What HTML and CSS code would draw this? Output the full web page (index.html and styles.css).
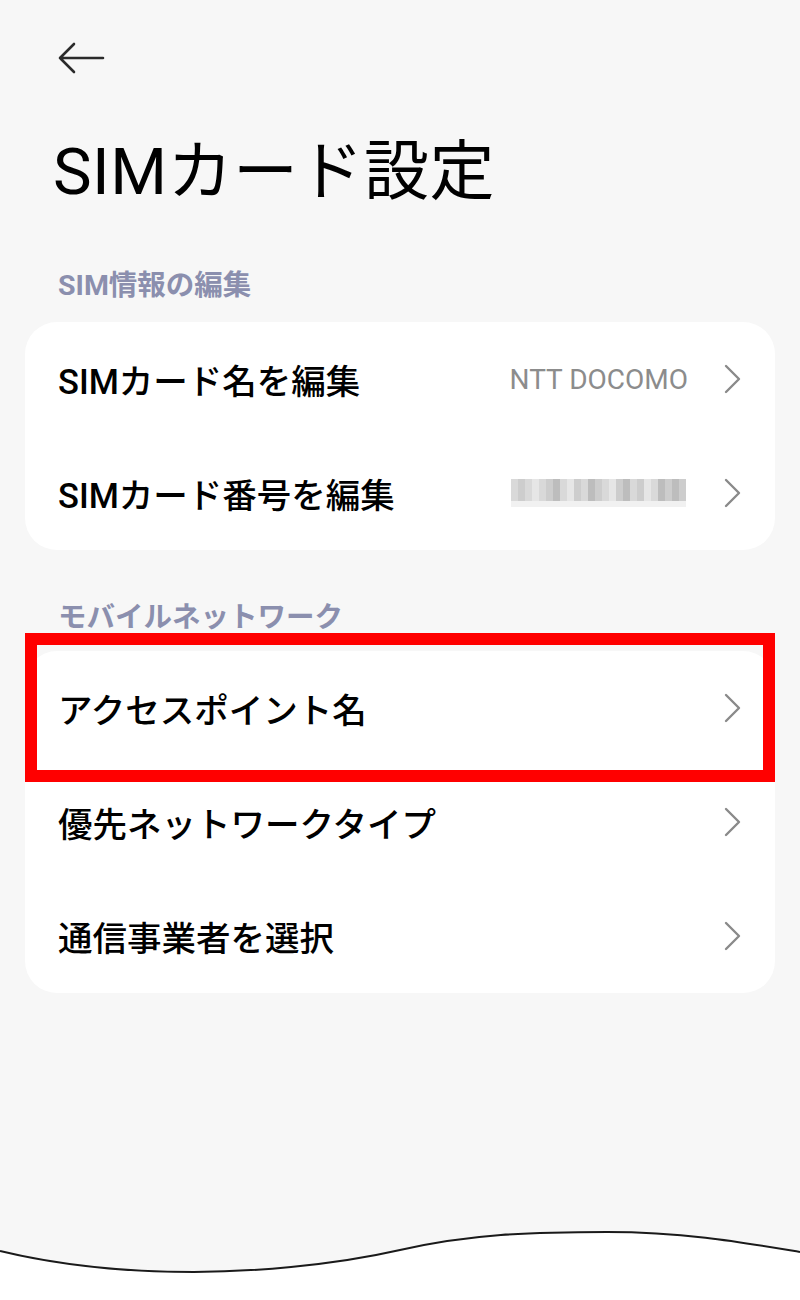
FILE: index.html
```html
<!DOCTYPE html>
<html lang="ja">
<head>
  <meta charset="UTF-8" />
  <meta name="viewport" content="width=device-width, initial-scale=1.0" />
  <title>SIMカード設定</title>
  <link rel="stylesheet" href="styles.css">
</head>
<body>
  <div class="page">
    <div class="topbar">
      <svg class="back" width="48" height="32" viewBox="0 0 48 32">
        <path d="M3 16 H46 M17 2 L3 16 L17 30" fill="none" stroke="#2b2b2b" stroke-width="2.6" stroke-linecap="round" stroke-linejoin="round"/>
      </svg>
    </div>

    <h1 class="title">SIMカード設定</h1>

    <h2 class="section">SIM情報の編集</h2>
    <div class="card">
      <div class="row">
        <span class="label">SIMカード名を編集</span>
        <span class="value">NTT DOCOMO</span>
        <svg class="chev" width="18" height="30" viewBox="0 0 18 30"><path d="M2 2 L15 15 L2 28" fill="none" stroke="#8a8a8a" stroke-width="2.4" stroke-linecap="round" stroke-linejoin="round"/></svg>
      </div>
      <div class="row">
        <span class="label">SIMカード番号を編集</span>
        <span class="blur">
          <span class="px g2"></span><span class="px g1"></span><span class="px g2"></span><span class="px g3"></span><span class="px g2"></span>
          <span class="px g1"></span><span class="px g4"></span><span class="px g2"></span><span class="px g3"></span><span class="px g1"></span>
          <span class="px g2"></span><span class="px g4"></span><span class="px g1"></span><span class="px g2"></span><span class="px g3"></span>
          <span class="px g1"></span><span class="px g4"></span><span class="px g2"></span><span class="px g1"></span><span class="px g3"></span>
          <span class="px g2"></span><span class="px g4"></span><span class="px g1"></span><span class="px g4"></span><span class="px g1"></span>
        </span>
        <svg class="chev" width="18" height="30" viewBox="0 0 18 30"><path d="M2 2 L15 15 L2 28" fill="none" stroke="#8a8a8a" stroke-width="2.4" stroke-linecap="round" stroke-linejoin="round"/></svg>
      </div>
    </div>

    <h2 class="section">モバイルネットワーク</h2>
    <div class="card">
      <div class="highlight"></div>
      <div class="row">
        <span class="label">アクセスポイント名</span>
        <svg class="chev" width="18" height="30" viewBox="0 0 18 30"><path d="M2 2 L15 15 L2 28" fill="none" stroke="#8a8a8a" stroke-width="2.4" stroke-linecap="round" stroke-linejoin="round"/></svg>
      </div>
      <div class="row">
        <span class="label">優先ネットワークタイプ</span>
        <svg class="chev" width="18" height="30" viewBox="0 0 18 30"><path d="M2 2 L15 15 L2 28" fill="none" stroke="#8a8a8a" stroke-width="2.4" stroke-linecap="round" stroke-linejoin="round"/></svg>
      </div>
      <div class="row">
        <span class="label">通信事業者を選択</span>
        <svg class="chev" width="18" height="30" viewBox="0 0 18 30"><path d="M2 2 L15 15 L2 28" fill="none" stroke="#8a8a8a" stroke-width="2.4" stroke-linecap="round" stroke-linejoin="round"/></svg>
      </div>
    </div>

    <svg class="wave" width="800" height="70" viewBox="0 0 800 70" preserveAspectRatio="none">
      <path d="M0 21 C70 38 140 42 194 42 S330 36 400 20 S530 2 607 2 S740 12 800 22 L800 70 L0 70 Z" fill="#ffffff"/>
      <path d="M0 21 C70 38 140 42 194 42 S330 36 400 20 S530 2 607 2 S740 12 800 22" fill="none" stroke="#1a1a1a" stroke-width="2"/>
    </svg>
  </div>
</body>
</html>
```

FILE: styles.css
```css
* {
  box-sizing: border-box;
  margin: 0;
  padding: 0;
}
body {
  font-family: Roboto, "Noto Sans CJK JP", sans-serif;
  background: #f7f7f7;
  color: #000;
}
.page {
  min-height: 1300px;
  display: flex;
  flex-direction: column;
  padding: 0 25px;
}
.topbar {
  padding: 42px 0 0 32px;
  height: 74px;
}
.back {
  display: block;
}
.title {
  font-size: 65px;
  font-weight: 400;
  line-height: 80px;
  margin: 58px 0 0 28px;
  letter-spacing: 0.5px;
}
.section {
  font-size: 28.5px;
  font-weight: 700;
  line-height: 40px;
  color: #8b8fae;
  padding-left: 33px;
  margin-top: 54px;
  margin-bottom: 16px;
}
.card + .section {
  margin-top: 48px;
  margin-bottom: 13px;
}
.card {
  position: relative;
  background: #fff;
  border-radius: 32px;
}
.row {
  display: flex;
  align-items: center;
  height: 114px;
  padding: 0 33px;
}
.label {
  flex: 1;
  font-size: 34.5px;
  font-weight: 500;
}
.value {
  font-size: 28px;
  color: #8c8c8c;
  margin-right: 36px;
}
.chev {
  display: block;
}
.blur {
  display: flex;
  margin-right: 38px;
  height: 28px;
  padding-bottom: 6px;
  background: linear-gradient(#fff 0, #fff 78%, #f1f1f1 78%, #f1f1f1 100%);
}
.px {
  width: 7px;
  height: 22px;
}
.g1 { background: #cdcdcd; }
.g2 { background: #d9d9d9; }
.g3 { background: #e6e6e6; }
.g4 { background: #bdbdbd; }
.highlight {
  position: absolute;
  top: -18px;
  left: 0;
  right: 0;
  height: 149px;
  border: 12px solid #ff0000;
  pointer-events: none;
  z-index: 1;
}
.wave {
  display: block;
  margin: auto -25px 0;
}
```
